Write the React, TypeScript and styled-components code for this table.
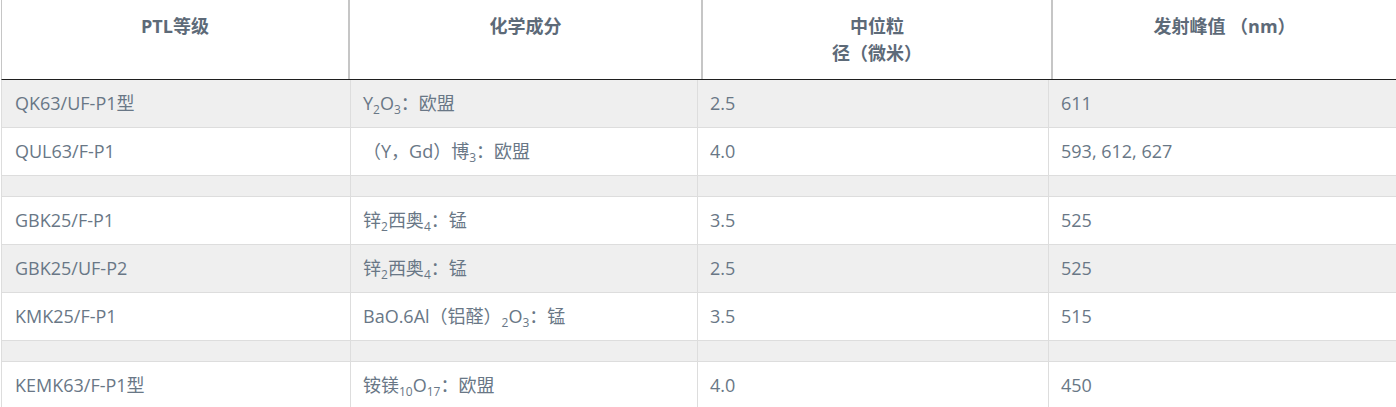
import styled, { createGlobalStyle } from "styled-components";

const GlobalStyle = createGlobalStyle`
  html, body {
    margin: 0;
    padding: 0;
    background: #ffffff;
    overflow: hidden;
  }

  body {
    font-family: "Open Sans", "Noto Sans CJK SC", sans-serif;
  }
`;

type Row = {
  grade: string;
  formula: React.ReactNode;
  size: string;
  peak: string;
} | null;

const rows: Row[] = [
  {
    grade: "QK63/UF-P1型",
    formula: (
      <>
        Y<Sub>2</Sub>O<Sub>3</Sub>：欧盟
      </>
    ),
    size: "2.5",
    peak: "611",
  },
  {
    grade: "QUL63/F-P1",
    formula: (
      <>
        （Y，Gd）博<Sub>3</Sub>：欧盟
      </>
    ),
    size: "4.0",
    peak: "593, 612, 627",
  },
  null,
  {
    grade: "GBK25/F-P1",
    formula: (
      <>
        锌<Sub>2</Sub>西奥<Sub>4</Sub>：锰
      </>
    ),
    size: "3.5",
    peak: "525",
  },
  {
    grade: "GBK25/UF-P2",
    formula: (
      <>
        锌<Sub>2</Sub>西奥<Sub>4</Sub>：锰
      </>
    ),
    size: "2.5",
    peak: "525",
  },
  {
    grade: "KMK25/F-P1",
    formula: (
      <>
        BaO.6Al（铝醛）<Sub>2</Sub>O<Sub>3</Sub>：锰
      </>
    ),
    size: "3.5",
    peak: "515",
  },
  null,
  {
    grade: "KEMK63/F-P1型",
    formula: (
      <>
        铵镁<Sub>10</Sub>O<Sub>17</Sub>：欧盟
      </>
    ),
    size: "4.0",
    peak: "450",
  },
];

const App = () => {
  return (
    <>
      <GlobalStyle />
      <Table>
        <HeadRow>
          <HeadCell>PTL等级</HeadCell>
          <HeadCell>化学成分</HeadCell>
          <HeadCell>
            中位粒
            <br />
            径（微米）
          </HeadCell>
          <HeadCell>发射峰值 （nm）</HeadCell>
        </HeadRow>

        {rows.map((row, i) => (
          <BodyRow key={i} $striped={i % 2 === 0}>
            <Cell $spacer={!row}>{row?.grade}</Cell>
            <Cell $spacer={!row}>{row?.formula}</Cell>
            <Cell $spacer={!row}>{row?.size}</Cell>
            <Cell $spacer={!row}>{row?.peak}</Cell>
          </BodyRow>
        ))}
      </Table>
    </>
  );
};

export default App;

const Table = styled.div`
  margin-left: 1px;
  width: 1395px;
  color: #697786;
  font-size: 18px;
  line-height: 27px;
`;

const HeadRow = styled.div`
  display: grid;
  grid-template-columns: 348px 353px 350px 1fr;
  border-left: 1px solid #c6c6c6;
  border-bottom: 1px solid #1f1f1f;
  background: #ffffff;
`;

const HeadCell = styled.div`
  box-sizing: border-box;
  padding: 13px 10px 12px;
  border-right: 2px solid #c6c6c6;
  text-align: center;
  vertical-align: top;
  font-weight: 700;
  color: #5d6a78;

  &:last-child {
    border-right: 0;
  }
`;

const BodyRow = styled.div<{ $striped: boolean }>`
  display: grid;
  grid-template-columns: 349px 347px 351px 1fr;
  border-left: 1px solid #dddddd;
  border-bottom: 1px solid #dddddd;
  background: ${(props) => (props.$striped ? "#efefef" : "#ffffff")};
`;

const Cell = styled.div<{ $spacer: boolean }>`
  box-sizing: border-box;
  padding: ${(props) => (props.$spacer ? "0" : "10px 12px")};
  height: ${(props) => (props.$spacer ? "20px" : "auto")};
  border-right: 1px solid #dddddd;
  white-space: nowrap;

  &:first-child {
    padding-left: ${(props) => (props.$spacer ? "0" : "13px")};
  }

  &:last-child {
    border-right: 0;
  }
`;

function Sub({ children }: { children: React.ReactNode }) {
  return <SubText>{children}</SubText>;
}

const SubText = styled.sub`
  font-size: 12px;
  line-height: 0;
  vertical-align: -4px;
`;
